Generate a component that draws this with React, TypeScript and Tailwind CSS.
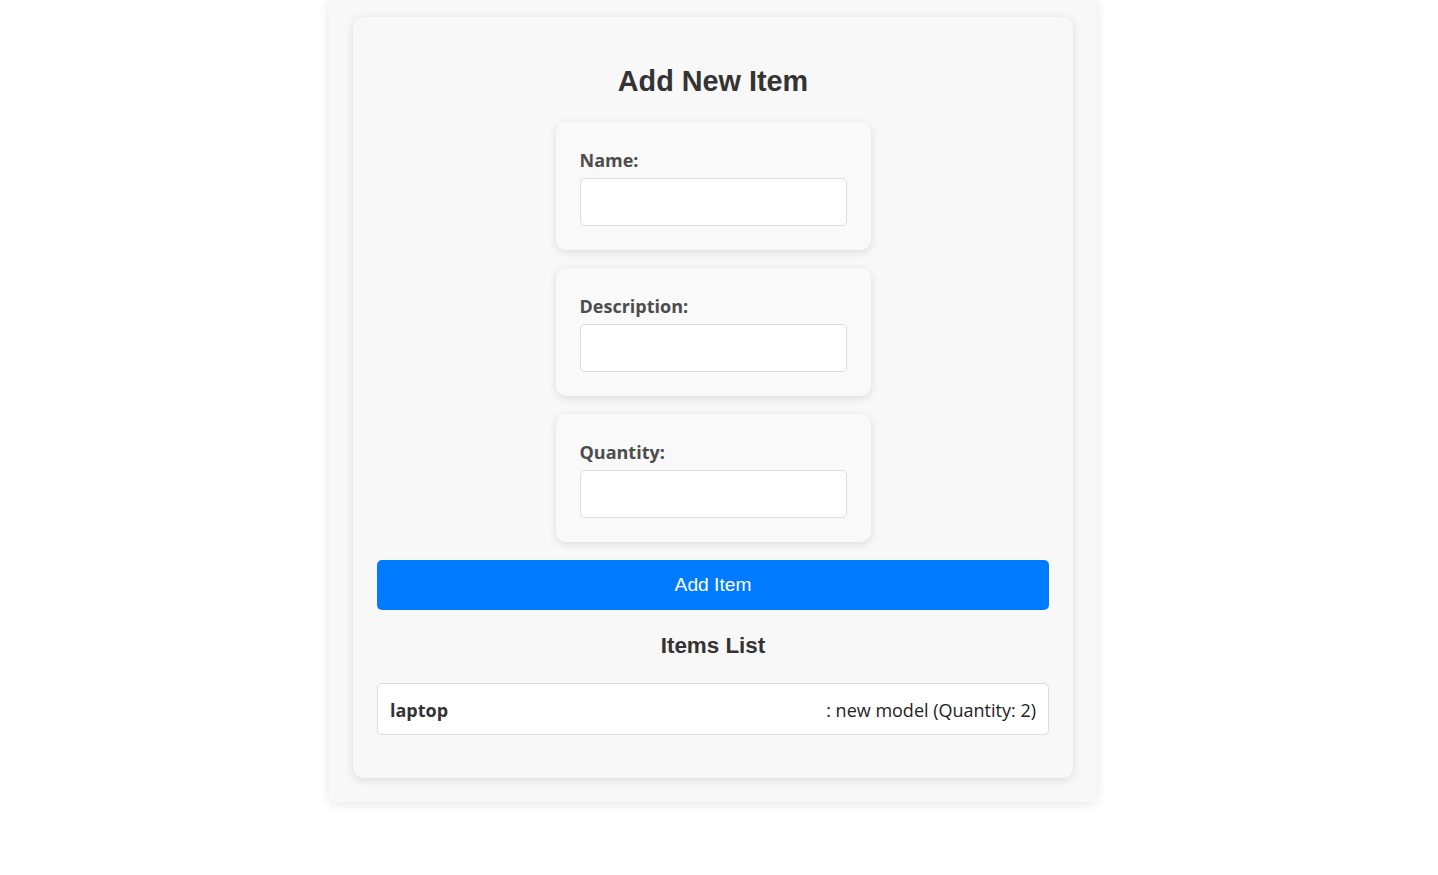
import React from "react";

const sans = { fontFamily: '"Liberation Sans", Arial, sans-serif' };

function Field({ label }: { label: string }) {
  return (
    <div className="w-[315px] rounded-[10px] bg-[#f9f9f9] px-6 pt-6 pb-6 shadow-[0_2px_8px_rgba(0,0,0,0.12)]">
      <label className="block text-[18px] font-bold leading-[29px] mb-[3px] text-[#4d4d4d] [font-family:'Open_Sans',sans-serif]">
        {label}
      </label>
      <input
        type="text"
        className="block w-full h-[48px] rounded-[5px] border border-[#dddddd] bg-white px-3 outline-none"
      />
    </div>
  );
}

export default function App() {
  return (
    <div className="min-h-screen bg-white">
      <div className="ml-[329px] w-[768px] bg-[#f8f8f8] px-6 pt-[17px] pb-6 rounded-b-lg shadow-[0_2px_12px_rgba(0,0,0,0.1)]">
        <div className="rounded-[10px] bg-[#f8f8f8] px-6 pt-6 pb-6 shadow-[0_2px_10px_rgba(0,0,0,0.12)]">
          <h2
            className="text-center text-[28.8px] font-bold leading-[33px] text-[#333333] mt-6 mb-6"
            style={sans}
          >
            Add New Item
          </h2>
          <div className="flex flex-col items-center gap-[18px]">
            <Field label="Name:" />
            <Field label="Description:" />
            <Field label="Quantity:" />
          </div>
          <button
            className="mt-[18px] flex h-[50px] w-full items-center justify-center rounded-[5px] bg-[#007bff] text-[19.2px] text-white"
            style={sans}
          >
            Add Item
          </button>
          <h3
            className="mt-[22px] mb-[23px] text-center text-[22.4px] font-bold leading-[28px] text-[#333333]"
            style={sans}
          >
            Items List
          </h3>
          <ul className="mb-[19px]">
            <li className="flex h-[52px] items-center justify-between rounded-[5px] border border-[#dddddd] bg-white px-3 pt-[2px] text-[18px] [font-family:'Open_Sans',sans-serif]">
              <strong className="font-bold text-[#333333]">laptop</strong>
              <span className="text-[#222222]">: new model (Quantity: 2)</span>
            </li>
          </ul>
        </div>
      </div>
    </div>
  );
}
